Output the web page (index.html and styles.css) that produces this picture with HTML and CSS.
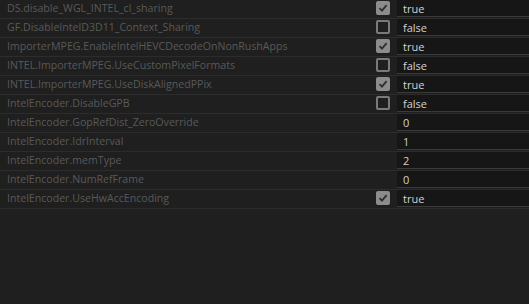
FILE: index.html
```html
<!DOCTYPE html>
<html>
<head>
<meta charset="utf-8">
<link rel="stylesheet" href="styles.css">
</head>
<body>
<div class="table">
  <div class="row"><div class="label">DS.disable_WGL_INTEL_cl_sharing</div><div class="cell-check"><span class="cb on"><svg viewBox="0 0 14 14"><path d="M3.5 7.2 L6 9.6 L10.6 4.2"/></svg></span></div><div class="value">true</div></div>
  <div class="row"><div class="label">GF.DisableIntelD3D11_Context_Sharing</div><div class="cell-check"><span class="cb"></span></div><div class="value">false</div></div>
  <div class="row"><div class="label">ImporterMPEG.EnableIntelHEVCDecodeOnNonRushApps</div><div class="cell-check"><span class="cb on"><svg viewBox="0 0 14 14"><path d="M3.5 7.2 L6 9.6 L10.6 4.2"/></svg></span></div><div class="value">true</div></div>
  <div class="row"><div class="label">INTEL.ImporterMPEG.UseCustomPixelFormats</div><div class="cell-check"><span class="cb"></span></div><div class="value">false</div></div>
  <div class="row"><div class="label">INTEL.ImporterMPEG.UseDiskAlignedPPix</div><div class="cell-check"><span class="cb on"><svg viewBox="0 0 14 14"><path d="M3.5 7.2 L6 9.6 L10.6 4.2"/></svg></span></div><div class="value">true</div></div>
  <div class="row"><div class="label">IntelEncoder.DisableGPB</div><div class="cell-check"><span class="cb"></span></div><div class="value">false</div></div>
  <div class="row"><div class="label">IntelEncoder.GopRefDist_ZeroOverride</div><div class="cell-check"></div><div class="value">0</div></div>
  <div class="row"><div class="label">IntelEncoder.IdrInterval</div><div class="cell-check"></div><div class="value">1</div></div>
  <div class="row"><div class="label">IntelEncoder.memType</div><div class="cell-check"></div><div class="value">2</div></div>
  <div class="row"><div class="label">IntelEncoder.NumRefFrame</div><div class="cell-check"></div><div class="value">0</div></div>
  <div class="row"><div class="label">IntelEncoder.UseHwAccEncoding</div><div class="cell-check"><span class="cb on"><svg viewBox="0 0 14 14"><path d="M3.5 7.2 L6 9.6 L10.6 4.2"/></svg></span></div><div class="value">true</div></div>
</div>
</body>
</html>
```
FILE: styles.css
```css
html, body {
  margin: 0;
  padding: 0;
  background: #1f1f1f;
  width: 529px;
  height: 304px;
  overflow: hidden;
}
.table {
  display: flex;
  flex-direction: column;
  font-family: "Open Sans", "DejaVu Sans", sans-serif;
  font-size: 11px;
}
.row {
  display: flex;
  align-items: stretch;
  height: 18px;
  border-bottom: 1px solid #2c2c2c;
}
.label {
  flex: 1;
  padding-left: 7px;
  color: #595959;
  font-size: 10.6px;
  line-height: 17px;
  white-space: nowrap;
  overflow: hidden;
}
.cell-check {
  width: 14px;
  margin-right: 7px;
  display: flex;
  align-items: flex-start;
  padding-top: 1px;
}
.cb {
  width: 14px;
  height: 14px;
  box-sizing: border-box;
  border: 2px solid #7a7a7a;
  border-radius: 2px;
  display: block;
}
.cb.on {
  background: #8c8c8c;
  border-color: #8c8c8c;
}
.cb svg {
  display: block;
  width: 14px;
  height: 14px;
  margin: -2px;
}
.cb svg path {
  fill: none;
  stroke: #2e2e2e;
  stroke-width: 1.8;
}
.value {
  width: 132px;
  box-sizing: border-box;
  height: 17px;
  background: #161616;
  border-bottom: 1px solid #3a3a3a;
  color: #d2d2d2;
  padding-left: 6px;
  line-height: 17px;
}
```
